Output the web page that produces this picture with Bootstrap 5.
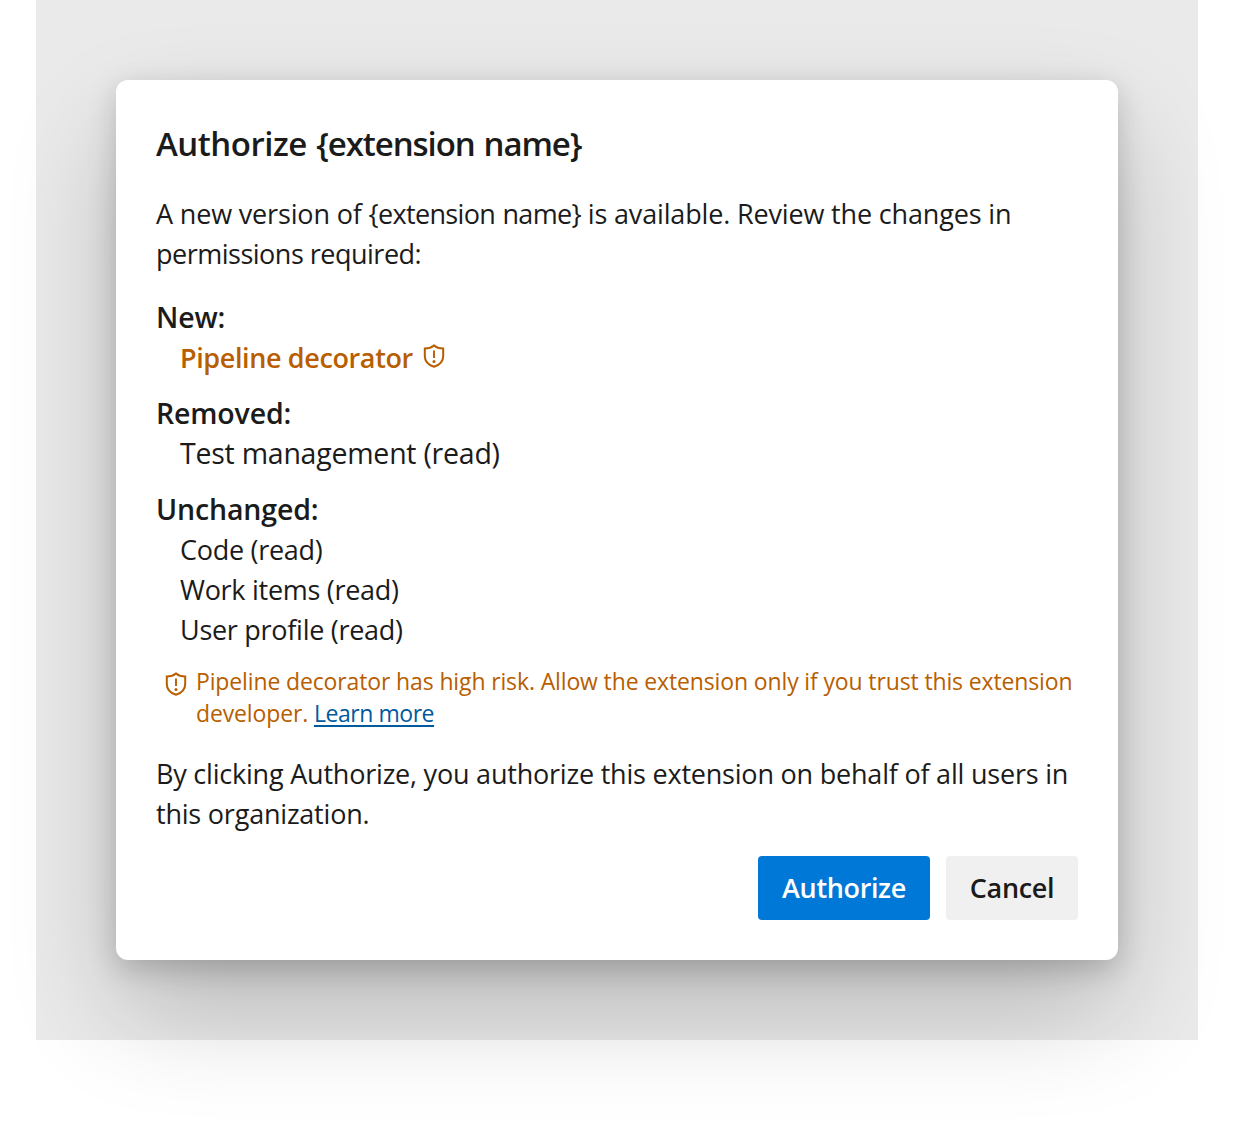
<!DOCTYPE html>
<html lang="en">
<head>
<meta charset="utf-8">
<meta name="viewport" content="width=device-width, initial-scale=1">
<title>Authorize extension</title>
<link href="https://cdn.jsdelivr.net/npm/bootstrap@5.3.0/dist/css/bootstrap.min.css" rel="stylesheet">
<style>
body{min-height:100vh;background:#fff;color:#1b1b1b;font-family:"Open Sans","Noto Sans",sans-serif;font-size:27px;line-height:40px;letter-spacing:-.2px}
.backdrop-area{width:1162px;height:1040px;margin-left:36px;padding:80px;background:#eaeaea}
.auth-dialog{width:1002px;height:880px;padding:40px;border-radius:12px;background:#fff;box-shadow:0 51.2px 108px -3px rgba(0,0,0,.22),0 9.6px 28.8px rgba(0,0,0,.18)}
.auth-title{font-size:33px;font-weight:600;line-height:48px;margin:0 0 26px;letter-spacing:-.5px;word-spacing:1.5px}
.auth-title .ext-token{letter-spacing:-1.1px}
.intro{letter-spacing:-.16px}
.intro .ext-token{letter-spacing:-.67px;word-spacing:1px}
.intro .intro-end{letter-spacing:-.5px}
.groups{margin-top:24px}
.group-title{font-size:28.5px;font-weight:600;line-height:38px;padding-bottom:2px;margin:0;letter-spacing:-.15px}
.perm-list{padding-left:24px;margin:0 0 16px;list-style:none;letter-spacing:-.28px}
.perm-new{font-weight:600;color:#b85e00;letter-spacing:-.38px}
.perm-new .shield-icon{margin:5px 0 0 9px}
.perm-removed{font-size:28.5px;line-height:38px;padding-bottom:2px;letter-spacing:-.24px}
.risk-note{color:#b85e00;font-size:23px;line-height:32px;padding-left:8px;gap:8px;letter-spacing:-.135px}
.risk-note .shield-icon{margin-top:5px}
.risk-text{margin:-1px 0 1px}
.risk-note a{color:#005a9e;letter-spacing:-.45px;text-decoration-thickness:1.5px;text-underline-offset:3px}
.consent{margin-top:24px;letter-spacing:-.21px}
.shield-icon{width:24px;height:26px;flex:none;display:block}
.dlg-btn{height:64px;border:0;border-radius:4px;font-size:27px;font-weight:600;padding:0;letter-spacing:-.35px}
.btn-auth{width:172px;background:#0078d7;color:#fff}
.btn-dismiss{width:132px;background:#f0f0f0;color:#1b1b1b}
</style>
</head>
<body>
<svg class="d-none"><symbol id="shield" viewBox="0 0 24 26"><path d="M12 2.400C9.500 4.500 6.500 5.400 2.800 5.500V13c0 5.400 3.600 9 9.200 10.800 5.600-1.800 9.200-5.400 9.200-10.800V5.500C17.500 5.400 14.500 4.500 12 2.400Z" fill="none" stroke="currentColor" stroke-width="2"/><path d="M12 7.500v7.500" stroke="currentColor" stroke-width="1.900"/><circle cx="12" cy="18.500" r="1.500" fill="currentColor"/></symbol></svg>
<main class="backdrop-area">
<section class="auth-dialog d-flex flex-column" role="dialog" aria-labelledby="dlgTitle">
<h1 class="auth-title" id="dlgTitle">Authorize <span class="ext-token">{extension name}</span></h1>
<p class="intro mb-0 text-nowrap">A new version of <span class="ext-token">{extension name}</span> is available. Review the changes in<br><span class="intro-end">permissions required:</span></p>
<div class="groups">
<h2 class="group-title">New:</h2>
<ul class="perm-list"><li class="perm-new d-flex"><span>Pipeline decorator</span><svg class="shield-icon"><use href="#shield"/></svg></li></ul>
<h2 class="group-title">Removed:</h2>
<ul class="perm-list perm-removed"><li>Test management (read)</li></ul>
<h2 class="group-title">Unchanged:</h2>
<ul class="perm-list"><li>Code (read)</li><li>Work items (read)</li><li>User profile (read)</li></ul>
</div>
<div class="risk-note d-flex"><svg class="shield-icon"><use href="#shield"/></svg><div class="risk-text text-nowrap">Pipeline decorator has high risk. Allow the extension only if you trust this extension<br>developer. <a href="#">Learn more</a></div></div>
<p class="consent mb-0 text-nowrap">By clicking Authorize, you authorize this extension on behalf of all users in<br>this organization.</p>
<div class="d-flex justify-content-end gap-3 mt-auto"><button class="btn dlg-btn btn-auth">Authorize</button><button class="btn dlg-btn btn-dismiss">Cancel</button></div>
</section>
</main>
<script src="https://cdn.jsdelivr.net/npm/bootstrap@5.3.0/dist/js/bootstrap.bundle.min.js"></script>
</body>
</html>
